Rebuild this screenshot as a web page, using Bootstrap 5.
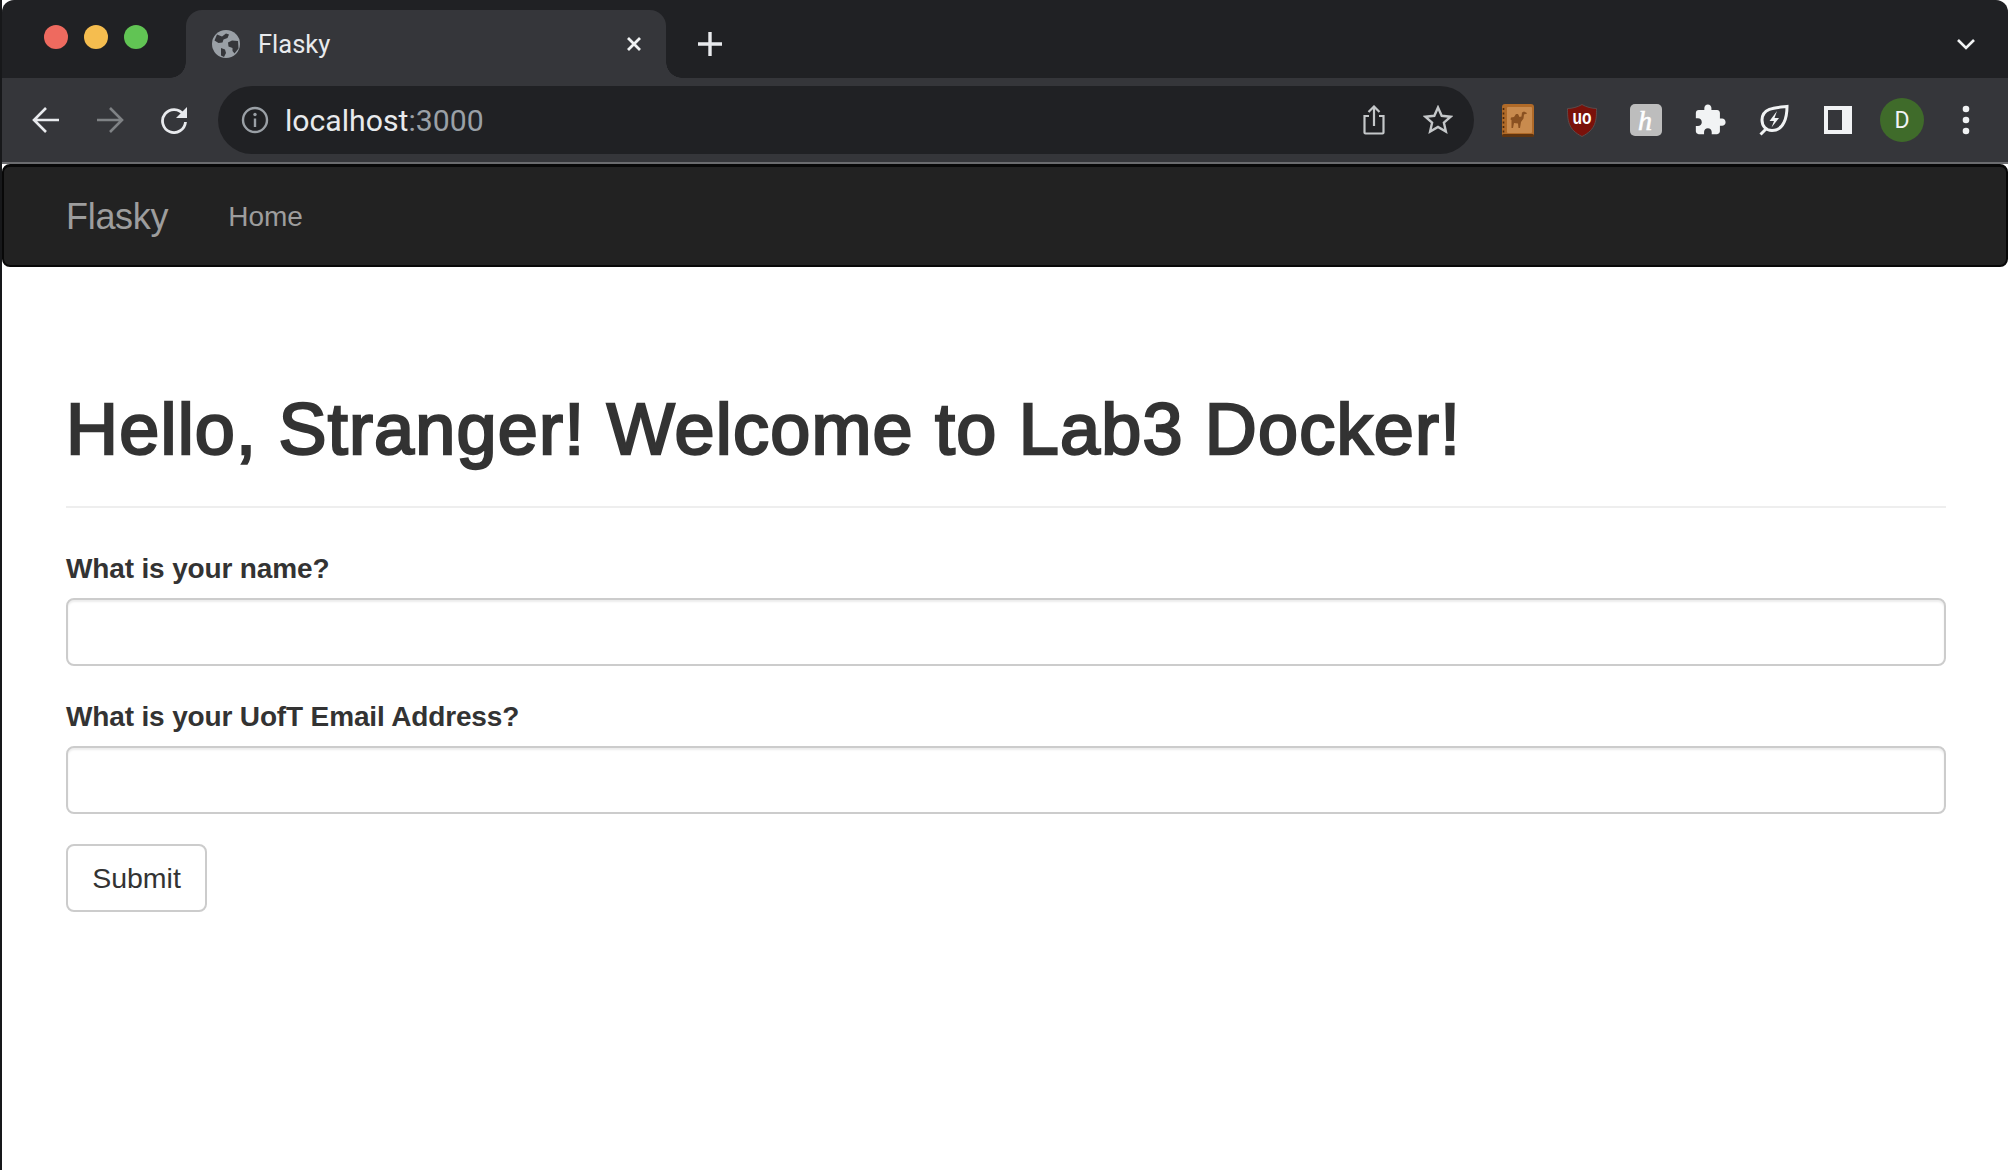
<!DOCTYPE html>
<html lang="en">
<head>
    <meta charset="UTF-8" />
    <title>Flasky</title>
    <link href="https://cdn.jsdelivr.net/npm/bootstrap@5.3.2/dist/css/bootstrap.min.css" rel="stylesheet" />
    <style>
        html, body { height: 100%; }
        body { background: #17181a; font-family: "Liberation Sans", Arial, sans-serif; color: #333; overflow: hidden; }
        .win-frame { margin-left: 2px; height: 100%; background: #fff; display: flex; flex-direction: column; }
        .tab-strip { height: 78px; background: #202124; border-radius: 12px 12px 0 0; flex: none; }
        .lights { padding-left: 42px; width: 184px; gap: 16px; padding-bottom: 4px; }
        .light { width: 24px; height: 24px; border-radius: 50%; }
        .browser-tab { position: relative; width: 480px; height: 68px; margin-top: 10px; background: #35363a; border-radius: 16px 16px 0 0; padding: 0 23px 0 26px; color: #e8eaed; font: 25.5px Roboto, sans-serif; }
        .browser-tab::before, .browser-tab::after { content: ""; position: absolute; bottom: 0; width: 16px; height: 16px; }
        .browser-tab::before { left: -16px; background: radial-gradient(circle at 0 0, #202124 15.5px, #35363a 16px); }
        .browser-tab::after { right: -16px; background: radial-gradient(circle at 100% 0, #202124 15.5px, #35363a 16px); }
        .tab-title { margin-left: 18px; }
        .new-tab { margin-left: 24px; width: 40px; margin-top: 10px; }
        .tab-menu { width: 64px; margin-right: 10px; margin-top: 10px; }
        .tool-bar { height: 86px; background: #35363a; padding-left: 12px; padding-right: 10px; border-bottom: 2px solid #6b6c6f; flex: none; }
        .tool-btn { width: 64px; height: 68px; flex: none; }
        .omni { height: 68px; margin: 0 12px; background: #202124; border-radius: 34px; padding-left: 23px; padding-right: 4px; font: 30.2px Roboto, sans-serif; color: #e8eaed; }
        .omni-port { color: #9aa0a6; }
        .omni-url { margin-left: 16px; }
        .avatar-dot { width: 44px; height: 44px; border-radius: 50%; background: #3f6b2a; color: #f1f3f4; font: 23px Roboto, sans-serif; }
        .site-nav { height: 103px; background: #222; border: 2px solid #080808; border-radius: 8px; border-top-width: 3px; padding: 2px 0 0 62px; margin-bottom: 0; flex: none; }
        .site-nav .navbar-brand { font-size: 36px; color: #9d9d9d; padding: 0; margin: 0; letter-spacing: -.3px; line-height: 40px; }
        .site-nav .nav-link { font-size: 28px; color: #9d9d9d; padding: 0; margin-left: 60px; line-height: 40px; }
        .site-nav .navbar-nav { margin-left: -8px; }
        .page-body { padding: 0 62px 0 64px; }
        .page-head { margin-top: 123px; padding-bottom: 37px; border-bottom: 2px solid #eee; margin-bottom: 41px; }
        .page-head h1 { font-size: 72px; font-weight: 400; line-height: 79px; margin: 0; color: #333; letter-spacing: 1.2px; -webkit-text-stroke: 2.4px #333; }
        .field-block { margin-bottom: 31px; }
        .field-block + .field-block { margin-bottom: 30px; }
        .field-block label { font-size: 28px; line-height: 40px; font-weight: 700; margin-bottom: 9px; color: #333; display: block; letter-spacing: -.15px; }
        .field-block .form-control { height: 68px; border: 2px solid #ccc; border-radius: 8px; box-shadow: inset 0 2px 2px rgba(0,0,0,.075); }
        .btn-submit { height: 68px; width: 141px; font-size: 28.5px; line-height: 40px; padding: 0; color: #333; background: #fff; border: 2px solid #ccc; border-radius: 8px; }
    </style>
</head>
<body>
    <div class="win-frame">
        <div class="tab-strip d-flex align-items-center">
            <div class="lights d-flex align-items-center">
                <span class="light" style="background:#ee6a5f"></span>
                <span class="light" style="background:#f5bd4f"></span>
                <span class="light" style="background:#61c454"></span>
            </div>
            <div class="browser-tab d-flex align-items-center">
                <svg width="28" height="28" viewBox="0 0 28 28"><circle cx="14" cy="14" r="14" fill="#9aa0a6"/><path d="M5 4.500l5 2 4-3 3 1-1.500 3.500-4 1.500-1 3-4 .5-4-2.500zM26 11l-6-.5-4 2 .5 4 4 1.500v3l2 2.500 4-5zM9 18l4 1.500 1 3.500-2 4-3-1.500z" fill="#35363a"/></svg>
                <span class="tab-title">Flasky</span>
                <svg class="ms-auto" width="18" height="18" viewBox="0 0 18 18"><path d="M3 3l12 12M15 3L3 15" stroke="#f1f3f4" stroke-width="2.800" fill="none"/></svg>
            </div>
            <div class="new-tab d-flex justify-content-center">
                <svg width="26" height="26" viewBox="0 0 26 26"><path d="M13 1v24M1 13h24" stroke="#e8eaed" stroke-width="3.400" fill="none"/></svg>
            </div>
            <div class="tab-menu ms-auto d-flex justify-content-center">
                <svg width="20" height="14" viewBox="0 0 20 14"><path d="M2 3l8 8 8-8" stroke="#f1f3f4" stroke-width="2.600" fill="none"/></svg>
            </div>
        </div>

        <div class="tool-bar d-flex align-items-center">
            <div class="tool-btn d-flex align-items-center justify-content-center">
                <svg width="28" height="28" viewBox="0 0 28 28"><path d="M27 14H2M14 2L2 14l12 12" stroke="#e8eaed" stroke-width="2.600" fill="none"/></svg>
            </div>
            <div class="tool-btn d-flex align-items-center justify-content-center">
                <svg width="28" height="28" viewBox="0 0 28 28"><path d="M1 14h25M14 2l12 12-12 12" stroke="#7f8285" stroke-width="2.600" fill="none"/></svg>
            </div>
            <div class="tool-btn d-flex align-items-center justify-content-center">
                <svg width="28" height="28" viewBox="0 0 28 28"><path d="M23.500 8.500A11.500 11.500 0 1 0 25.500 16" stroke="#e8eaed" stroke-width="2.800" fill="none"/><path d="M27 1v11H16z" fill="#e8eaed"/></svg>
            </div>
            <div class="omni flex-grow-1 d-flex align-items-center">
                <svg width="28" height="28" viewBox="0 0 28 28"><circle cx="14" cy="14" r="12" stroke="#9aa0a6" stroke-width="2.400" fill="none"/><path d="M14 12.500V21" stroke="#9aa0a6" stroke-width="2.400"/><circle cx="14" cy="8.500" r="1.700" fill="#9aa0a6"/></svg>
                <span class="omni-url">localhost<span class="omni-port">:3000</span></span>
                <div class="tool-btn ms-auto d-flex align-items-center justify-content-center">
                    <svg width="24" height="30" viewBox="0 0 24 30"><path d="M7 11H2.500v16.500a1 1 0 0 0 1 1h17a1 1 0 0 0 1-1V11H17M12 21V2M6.500 7L12 1.500 17.500 7" stroke="#c4c7c9" stroke-width="2.200" fill="none"/></svg>
                </div>
                <div class="tool-btn d-flex align-items-center justify-content-center">
                    <svg width="30" height="30" viewBox="0 0 30 30"><path d="M15 2.500l3.700 8.300 9 .9-6.800 6 2 8.800L15 22l-7.900 4.500 2-8.800-6.800-6 9-.9z" stroke="#c4c7c9" stroke-width="2.400" fill="none"/></svg>
                </div>
            </div>
            <div class="tool-btn d-flex align-items-center justify-content-center">
                <svg width="32" height="33" viewBox="0 0 32 33">
                    <rect x="0" y="0" width="32" height="33" rx="3" fill="#b06a28"/>
                    <rect x="0" y="30" width="32" height="3" rx="1.500" fill="#5e3410"/>
                    <rect x="5" y="3" width="25" height="26" rx="1" fill="#c98b4e"/>
                    <path d="M1.500 4v25" stroke="#4d2a0c" stroke-width="1.600" stroke-dasharray="2 2.500"/>
                    <path d="M25 9l-3-1.500-2 1-.5 4-2 .5-1.500-3-2 0-2 3-3 .5-.5 2 1 .5 0 8h1.500l1-5 4 .5.5 4.500h1.500l1-6 2.500-3.500.5-4 3-1z" fill="#8a5121"/>
                </svg>
            </div>
            <div class="tool-btn d-flex align-items-center justify-content-center">
                <svg width="30" height="33" viewBox="0 0 30 33">
                    <path d="M15 .5C19 3 25 4.500 29.500 4.500c0 12-.5 21-14.500 28C1 25.500.5 16.500.5 4.500 5 4.500 11 3 15 .5z" fill="#7a110a" stroke="#5c4a4a"/>
                    <text x="15" y="20" text-anchor="middle" font-family="Liberation Sans, sans-serif" font-size="20" font-weight="700" fill="#fff" textLength="19" lengthAdjust="spacingAndGlyphs">uo</text>
                </svg>
            </div>
            <div class="tool-btn d-flex align-items-center justify-content-center">
                <svg width="32" height="32" viewBox="0 0 32 32">
                    <rect width="32" height="32" rx="5" fill="#bdbdbd"/>
                    <text x="15" y="26" text-anchor="middle" font-family="Liberation Serif, serif" font-style="italic" font-size="28" fill="#fff" stroke="#fff" stroke-width=".6">h</text>
                </svg>
            </div>
            <div class="tool-btn d-flex align-items-center justify-content-center">
                <svg width="34" height="34" viewBox="0 0 24 24"><path fill="#f1f3f4" d="M20.500 11H19V7c0-1.100-.9-2-2-2h-4V3.500C13 2.120 11.880 1 10.500 1S8 2.120 8 3.500V5H4c-1.100 0-1.990.9-1.990 2v3.800H3.500c1.490 0 2.700 1.210 2.700 2.700s-1.210 2.700-2.700 2.700H2V20c0 1.100.9 2 2 2h3.800v-1.500c0-1.490 1.210-2.700 2.700-2.700 1.490 0 2.700 1.210 2.700 2.700V22H17c1.100 0 2-.9 2-2v-4h1.500c1.380 0 2.500-1.120 2.500-2.500S21.880 11 20.500 11z"/></svg>
            </div>
            <div class="tool-btn d-flex align-items-center justify-content-center">
                <svg width="30" height="32" viewBox="0 0 30 32"><path d="M1.500 30.500l5-5M28 2.500c-10 1-25 1-25 13.500 0 6 4 10.500 10 10.500C25 26.500 28 13 28 2.500z" stroke="#f1f3f4" stroke-width="3" fill="none"/><path d="M18 7l-7.500 10H15l-2.500 6.500L20 14h-4.500z" fill="#f1f3f4"/></svg>
            </div>
            <div class="tool-btn d-flex align-items-center justify-content-center">
                <svg width="28" height="28" viewBox="0 0 28 28"><path fill-rule="evenodd" d="M0 0h28v28H0zM4 4v20h14V4z" fill="#f1f3f4"/></svg>
            </div>
            <div class="tool-btn d-flex align-items-center justify-content-center">
                <span class="avatar-dot d-flex align-items-center justify-content-center">D</span>
            </div>
            <div class="tool-btn d-flex align-items-center justify-content-center">
                <svg width="8" height="30" viewBox="0 0 8 30"><circle cx="4" cy="4" r="3.300" fill="#f1f3f4"/><circle cx="4" cy="15" r="3.300" fill="#f1f3f4"/><circle cx="4" cy="26" r="3.300" fill="#f1f3f4"/></svg>
            </div>
        </div>

        <nav class="navbar navbar-expand site-nav">
            <a class="navbar-brand" href="#">Flasky</a>
            <ul class="navbar-nav">
                <li class="nav-item"><a class="nav-link" href="#">Home</a></li>
            </ul>
        </nav>

        <div class="page-body">
            <div class="page-head">
                <h1>Hello, Stranger! Welcome to Lab3 Docker!</h1>
            </div>
            <form>
                <div class="field-block">
                    <label for="name">What is your name?</label>
                    <input class="form-control" id="name" type="text" />
                </div>
                <div class="field-block">
                    <label for="email">What is your UofT Email Address?</label>
                    <input class="form-control" id="email" type="text" />
                </div>
                <button class="btn btn-submit" type="button">Submit</button>
            </form>
        </div>
    </div>
    <script src="https://cdn.jsdelivr.net/npm/bootstrap@5.3.2/dist/js/bootstrap.bundle.min.js"></script>
</body>
</html>
